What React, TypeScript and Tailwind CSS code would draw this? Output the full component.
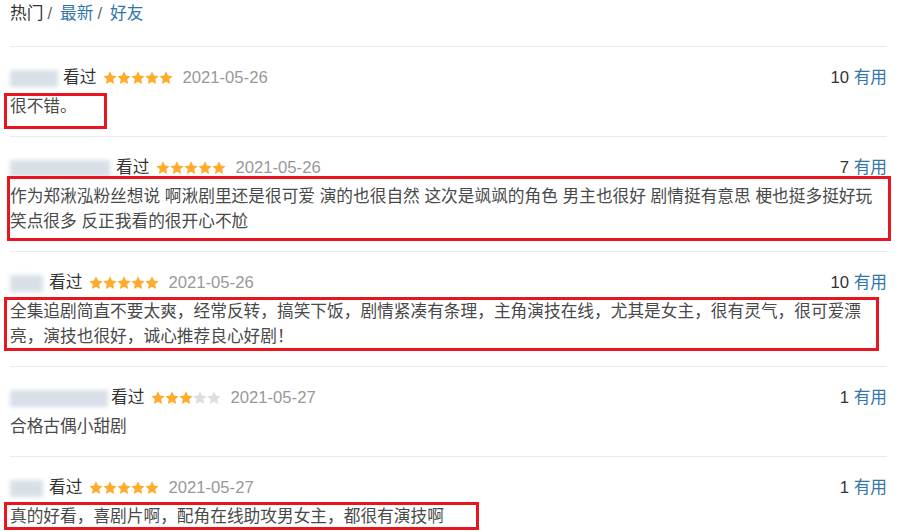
import React from 'react';

type Review = {
  nameW: string;
  stars: number;
  date: string;
  votes: number;
  text: string;
  box?: string;
};

const reviews: Review[] = [
  {
    nameW: 'w-[48px] mr-[5px]',
    stars: 5,
    date: '2021-05-26',
    votes: 10,
    text: '很不错。',
    box: '-left-[6px] -top-[1px] w-[103px] h-[36px]',
  },
  {
    nameW: 'w-[100px] mr-[6px]',
    stars: 5,
    date: '2021-05-26',
    votes: 7,
    text: '作为郑湫泓粉丝想说 啊湫剧里还是很可爱 演的也很自然 这次是飒飒的角色 男主也很好 剧情挺有意思 梗也挺多挺好玩 笑点很多 反正我看的很开心不尬',
    box: '-left-[3px] -top-[8px] w-[884px] h-[65px]',
  },
  {
    nameW: 'w-[33px] mr-[6px]',
    stars: 5,
    date: '2021-05-26',
    votes: 10,
    text: '全集追剧简直不要太爽，经常反转，搞笑下饭，剧情紧凑有条理，主角演技在线，尤其是女主，很有灵气，很可爱漂亮，演技也很好，诚心推荐良心好剧！',
    box: '-left-[6px] -top-[2px] w-[875px] h-[54px]',
  },
  {
    nameW: 'w-[98px] mr-[3px]',
    stars: 3,
    date: '2021-05-27',
    votes: 1,
    text: '合格古偶小甜剧',
  },
  {
    nameW: 'w-[33px] mr-[6px]',
    stars: 5,
    date: '2021-05-27',
    votes: 1,
    text: '真的好看，喜剧片啊，配角在线助攻男女主，都很有演技啊',
    box: '-left-[6px] -top-[2px] w-[475px] h-[28px]',
  },
];

const Star = ({ on }: { on: boolean }) => (
  <svg width="14" height="14" viewBox="0 0 24 24">
    <path
      d="M12 .5L15.4 7.8 23.4 8.8 17.5 14.3 19.1 22.2 12 18.3 4.9 22.2 6.5 14.3 .6 8.8 8.6 7.8Z"
      fill={on ? '#ffac2d' : '#dedede'}
    />
  </svg>
);

const App: React.FC = () => {
  return (
    <div
      className="w-[904px] h-[531px] overflow-hidden bg-white text-[16.7px] text-[#333]"
      style={{ fontFamily: '"Liberation Sans", "Noto Sans CJK SC", sans-serif' }}
    >
      <div className="pl-[10px] pt-[1px] leading-[26px] flex items-center">
        <span>热门</span>
        <span className="ml-[4px] text-[#666]">/</span>
        <a className="ml-[8px] text-[#3377aa]">最新</a>
        <span className="ml-[4px] text-[#666]">/</span>
        <a className="ml-[8px] text-[#3377aa]">好友</a>
      </div>

      <div className="mt-[19px] ml-[10px] w-[877px]">
        {reviews.map((r, i) => (
          <div key={i} className="border-t border-[#eaeaea] pt-[19px] pb-[17px]">
            <div className="flex items-center h-[24px]">
              <div className={`${r.nameW} h-[17px] bg-[#cfd8e2] blur-[2px] opacity-80`} />
              <span>看过</span>
              <span className="flex ml-[7px]">
                {[0, 1, 2, 3, 4].map((s) => (
                  <Star key={s} on={s < r.stars} />
                ))}
              </span>
              <span className="ml-[9px] text-[#999]">{r.date}</span>
              <span className="ml-auto">
                {r.votes} <a className="text-[#3377aa]">有用</a>
              </span>
            </div>
            <div className="relative mt-[4px] leading-[25px] text-[#494949]">
              {r.text}
              {r.box && (
                <div className={`absolute ${r.box} border-[3px] border-[#e8141e] pointer-events-none`} />
              )}
            </div>
          </div>
        ))}
      </div>
    </div>
  );
};

export default App;
